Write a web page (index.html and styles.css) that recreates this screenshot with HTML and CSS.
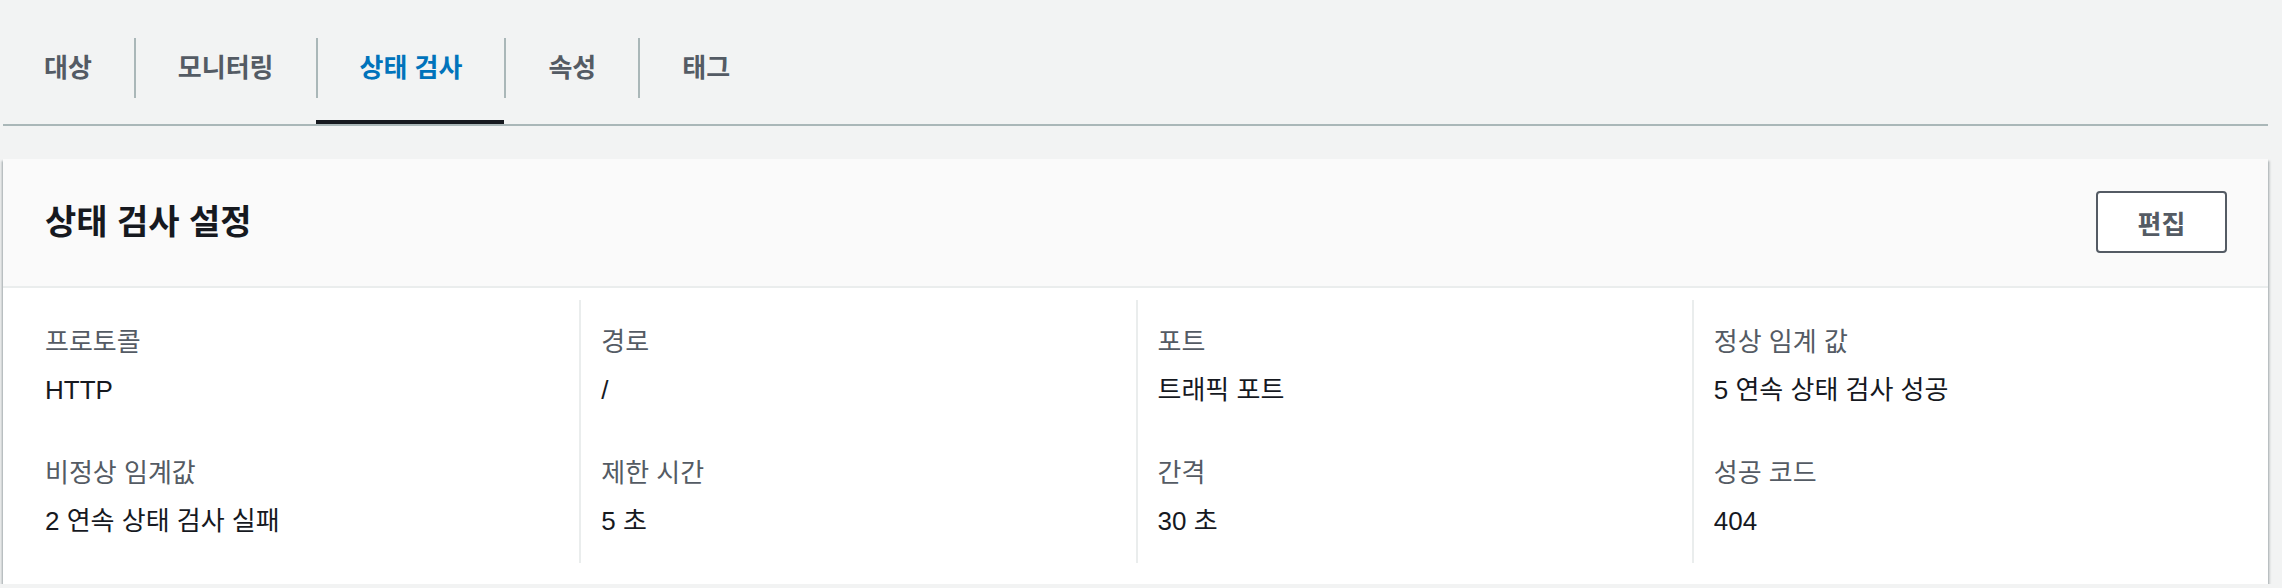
FILE: index.html
```html
<!DOCTYPE html>
<html lang="ko">
<head>
<meta charset="utf-8">
<title>상태 검사</title>
<link rel="stylesheet" href="styles.css">
</head>
<body>
<div class="page">
  <nav class="tabs">
    <div class="tab tab-first"><span class="tab-label">대상</span></div>
    <div class="tab"><span class="tab-label">모니터링</span></div>
    <div class="tab tab-active"><span class="tab-label">상태 검사</span></div>
    <div class="tab"><span class="tab-label">속성</span></div>
    <div class="tab"><span class="tab-label">태그</span></div>
  </nav>

  <section class="card">
    <header class="card-header">
      <h2 class="card-title">상태 검사 설정</h2>
      <button class="btn" type="button">편집</button>
    </header>
    <div class="card-body">
      <div class="col">
        <div class="pair">
          <div class="label">프로토콜</div>
          <div class="value">HTTP</div>
        </div>
        <div class="pair">
          <div class="label">비정상 임계값</div>
          <div class="value">2 연속 상태 검사 실패</div>
        </div>
      </div>
      <div class="col">
        <div class="pair">
          <div class="label">경로</div>
          <div class="value">/</div>
        </div>
        <div class="pair">
          <div class="label">제한 시간</div>
          <div class="value">5 초</div>
        </div>
      </div>
      <div class="col">
        <div class="pair">
          <div class="label">포트</div>
          <div class="value">트래픽 포트</div>
        </div>
        <div class="pair">
          <div class="label">간격</div>
          <div class="value">30 초</div>
        </div>
      </div>
      <div class="col">
        <div class="pair">
          <div class="label">정상 임계 값</div>
          <div class="value">5 연속 상태 검사 성공</div>
        </div>
        <div class="pair">
          <div class="label">성공 코드</div>
          <div class="value">404</div>
        </div>
      </div>
    </div>
  </section>
</div>
</body>
</html>
```

FILE: styles.css
```css
* {
  box-sizing: border-box;
}

html, body {
  margin: 0;
  padding: 0;
}

body {
  background: #f2f3f3;
  font-family: "Liberation Sans", "Noto Sans CJK KR", sans-serif;
  font-size: 26px;
  color: #16191f;
}

.page {
  padding: 0 14px 0 3px;
}

/* Tabs */
.tabs {
  display: flex;
  padding-top: 38px;
  border-bottom: 2px solid #aab7b8;
}

.tab {
  padding-bottom: 22px;
  border-bottom: 4px solid transparent;
}

.tab-label {
  display: block;
  line-height: 60px;
  padding: 0 42px;
  border-left: 2px solid #aab7b8;
  font-weight: 700;
  color: #545b64;
  white-space: nowrap;
}

.tab-first .tab-label {
  border-left: none;
  padding-left: 41px;
}

.tab-active {
  border-bottom-color: #16191f;
}

.tab-active .tab-label {
  color: #0073bb;
}

/* Card */
.card {
  margin-top: 33px;
  background: #ffffff;
  box-shadow: 0 2px 2px 0 rgba(0, 28, 36, 0.35),
              2px 2px 2px 0 rgba(0, 28, 36, 0.15),
              -2px 2px 2px 0 rgba(0, 28, 36, 0.15);
}

.card-header {
  display: flex;
  align-items: center;
  justify-content: space-between;
  padding: 32px 41px 33px 42px;
  background: #fafafa;
  border-bottom: 2px solid #eaeded;
}

.card-title {
  margin: 0;
  font-size: 34px;
  line-height: 62px;
  font-weight: 700;
  color: #16191f;
}

.btn {
  width: 131px;
  height: 62px;
  padding: 0;
  background: #ffffff;
  border: 2px solid #545b64;
  border-radius: 4px;
  font-family: inherit;
  font-size: 26px;
  font-weight: 700;
  color: #545b64;
}

.card-body {
  display: grid;
  grid-template-columns: repeat(4, 1fr);
  padding: 12px 20px 21px;
}

.col {
  padding: 24px 22px;
}

.col + .col {
  border-left: 2px solid #eaeded;
  padding-left: 20px;
}

.pair + .pair {
  margin-top: 47px;
}

.label {
  line-height: 36px;
  color: #545b64;
}

.value {
  margin-top: 12px;
  line-height: 36px;
  color: #16191f;
}
```
